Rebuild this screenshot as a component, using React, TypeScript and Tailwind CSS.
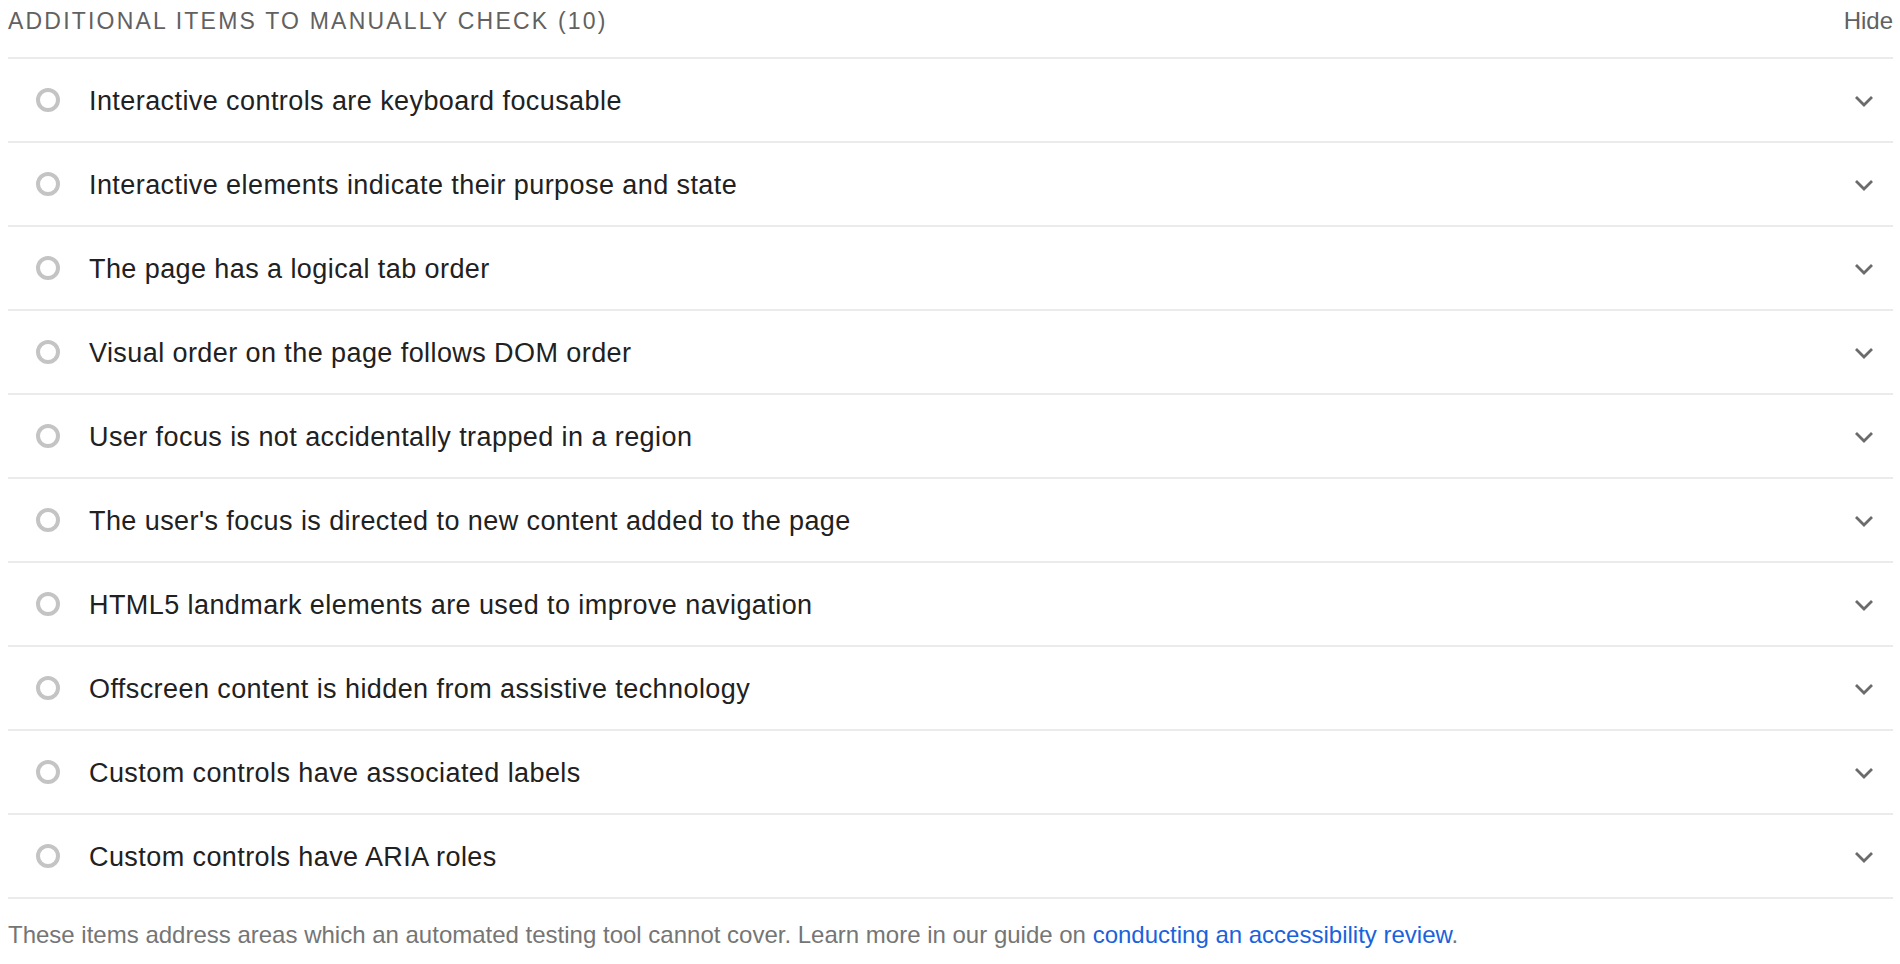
const items = [
  'Interactive controls are keyboard focusable',
  'Interactive elements indicate their purpose and state',
  'The page has a logical tab order',
  'Visual order on the page follows DOM order',
  'User focus is not accidentally trapped in a region',
  "The user's focus is directed to new content added to the page",
  'HTML5 landmark elements are used to improve navigation',
  'Offscreen content is hidden from assistive technology',
  'Custom controls have associated labels',
  'Custom controls have ARIA roles',
];

function Chevron() {
  return (
    <svg width="20" height="13" viewBox="0 0 20 13" className="text-[#6b6b6b]">
      <polyline points="2,3 10,11 18,3" fill="none" stroke="currentColor" strokeWidth="2.8" />
    </svg>
  );
}

export default function App() {
  return (
    <div className="min-h-screen bg-white font-['Liberation_Sans',Arial,sans-serif]">
      <div className="pl-2 pr-[7px]">
        {/* Header */}
        <div className="flex h-[57px] items-start justify-between pt-[7px]">
          <span className="text-[23px] leading-[28px] uppercase tracking-[2.2px] text-[#616161]">
            Additional items to manually check (10)
          </span>
          <button className="text-[24px] leading-[28px] text-[#616161]">Hide</button>
        </div>

        {/* Items */}
        <div className="border-b-2 border-[#ebebeb]">
          {items.map((t) => (
            <div
              key={t}
              className="flex h-[84px] items-center border-t-2 border-[#ebebeb] pl-[28px] pr-[19px]"
            >
              <span className="h-[24px] w-[24px] shrink-0 rounded-full border-4 border-[#c4c4c4]" />
              <span className="ml-[29px] flex-1 pt-[2px] text-[27px] tracking-[0.42px] text-[#212121]">{t}</span>
              <Chevron />
            </div>
          ))}
        </div>

        {/* Footer */}
        <p className="mt-[22px] text-[24px] leading-[28px] text-[#757575]">
          These items address areas which an automated testing tool cannot cover. Learn more in our guide on{' '}
          <a href="#" className="text-[#1a62dc]">conducting an accessibility review</a>.
        </p>
      </div>
    </div>
  );
}
